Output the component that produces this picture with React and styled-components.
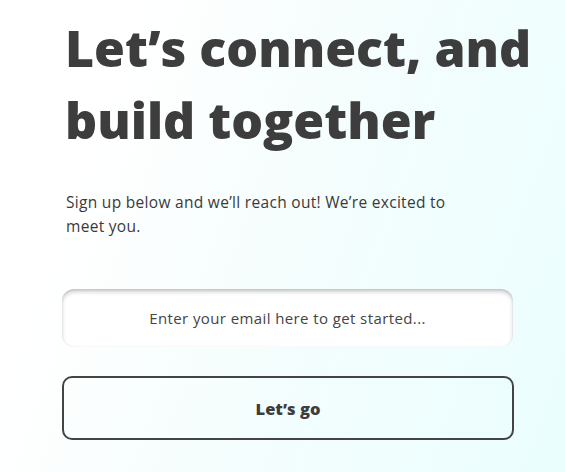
import styled, { createGlobalStyle } from 'styled-components';

const Global = createGlobalStyle`
  html, body {
    margin: 0;
    padding: 0;
  }
  body {
    font-family: 'Open Sans', 'Liberation Sans', sans-serif;
    color: #3d3d3d;
  }
`;

const Page = styled.div`
  width: 565px;
  height: 472px;
  box-sizing: border-box;
  overflow: hidden;
  background: linear-gradient(110deg, #ffffff 20%, #f3fdfd 60%, #eafefe 100%);
  padding: 12px 52px 0 62px;
`;

const Heading = styled.h1`
  margin: 0;
  padding-left: 3px;
  font-size: 50px;
  font-weight: 800;
  line-height: 72px;
  white-space: nowrap;
  color: #3d3d3d;
`;

const Intro = styled.p`
  margin: 34px 0 0;
  padding-left: 4px;
  width: 400px;
  font-size: 15.5px;
  letter-spacing: 0.3px;
  line-height: 24px;
  color: #3a3a3a;
`;

const EmailInput = styled.input`
  display: block;
  box-sizing: border-box;
  width: 451px;
  height: 58px;
  margin-top: 51px;
  border: none;
  border-radius: 12px;
  background: #ffffff;
  box-shadow: inset 0 3px 5px -1px rgba(0, 0, 0, 0.28), inset 0 0 2px rgba(0, 0, 0, 0.08);
  font-family: inherit;
  font-size: 15px;
  letter-spacing: 0.4px;
  text-align: center;
  color: #3d3d3d;
  outline: none;

  &::placeholder {
    color: #444;
    opacity: 1;
  }
`;

const GoButton = styled.button`
  display: block;
  box-sizing: border-box;
  width: 452px;
  height: 64px;
  margin-top: 29px;
  border: 2px solid #444;
  border-radius: 10px;
  background: transparent;
  font-family: inherit;
  font-size: 16.5px;
  font-weight: 800;
  color: #3d3d3d;
  cursor: pointer;
`;

export default function App() {
  return (
    <Page>
      <Global />
      <Heading>
        Let’s connect, and
        <br />
        build together
      </Heading>
      <Intro>Sign up below and we’ll reach out! We’re excited to meet you.</Intro>
      <EmailInput type="email" placeholder="Enter your email here to get started..." />
      <GoButton>Let’s go</GoButton>
    </Page>
  );
}
